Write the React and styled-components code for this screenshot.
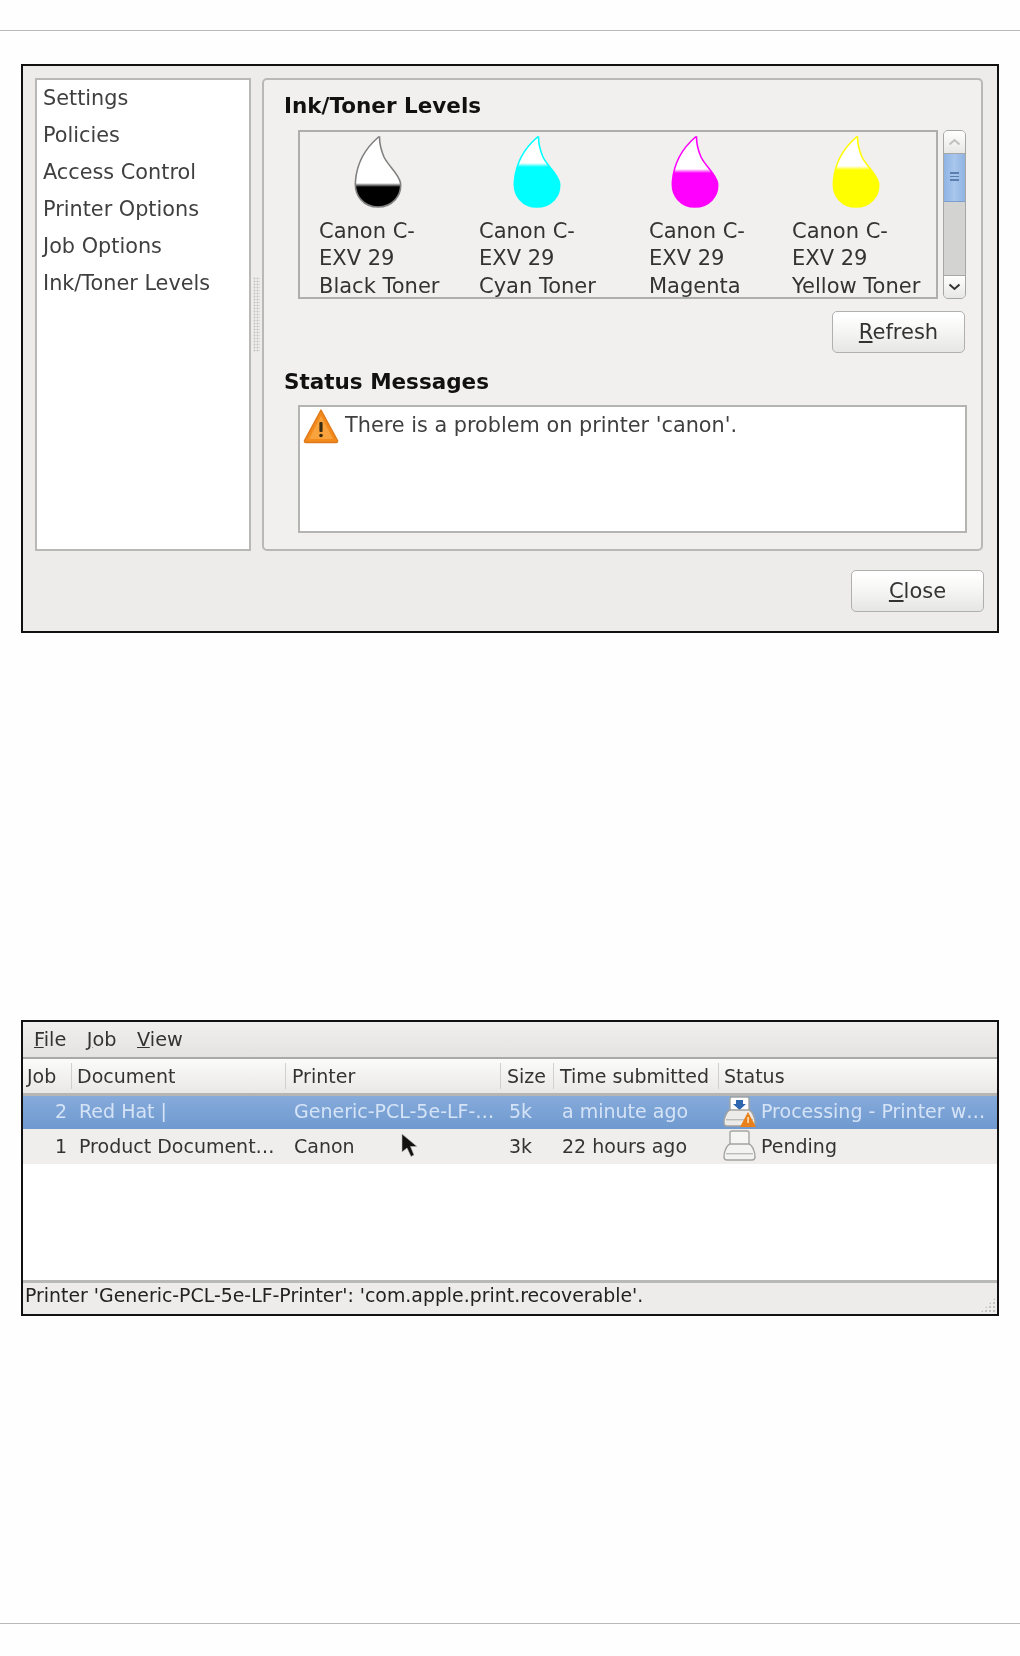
import React from "react";
import styled, { createGlobalStyle } from "styled-components";

const GlobalStyle = createGlobalStyle`
  html, body {
    margin: 0;
    padding: 0;
    background: #fefefe;
  }
  body {
    font-family: "DejaVu Sans", "Liberation Sans", sans-serif;
    color: #2e2e2e;
  }
`;

const Page = styled.div`
  position: relative;
  width: 1020px;
  height: 1656px;
  padding-top: 30px;
  box-sizing: border-box;
  overflow: hidden;
`;

const Rule = styled.div`
  height: 1px;
  background: #b9b9b9;
  margin-top: ${(p) => p.$top || 0}px;
`;

const Window = styled.div`
  box-sizing: border-box;
  width: 978px;
  margin-left: 21px;
  margin-top: ${(p) => p.$top}px;
  height: ${(p) => p.$height}px;
  border: 2px solid #111;
  background: #edecea;
  filter: blur(${(p) => p.$blur}px);
`;

const DialogBody = styled.div`
  display: flex;
  height: 473px;
  padding: 12px 13px 0 12px;
`;

const SideList = styled.ul`
  box-sizing: border-box;
  width: 216px;
  height: 473px;
  margin: 0;
  padding: 0 0 0 6px;
  list-style: none;
  background: #fff;
  border: 2px solid #b8b8b6;
  flex: none;
`;

const SideItem = styled.li`
  height: 37px;
  line-height: 36px;
  font-size: 20.8px;
  color: #3f3f3f;
  white-space: nowrap;
`;

const Grip = styled.div`
  width: 11px;
  flex: none;
  display: flex;
  align-items: center;
  justify-content: center;
`;

const GripDots = styled.div`
  width: 7px;
  height: 75px;
  background-image: radial-gradient(#c9c9c7 45%, transparent 50%);
  background-size: 3px 3px;
`;

const Panel = styled.div`
  box-sizing: border-box;
  width: 721px;
  flex: none;
  height: 473px;
  border: 2px solid #b8b8b6;
  border-radius: 5px;
  background: #f1f0ee;
  padding: 13px 14px 0 20px;
`;

const Heading = styled.h3`
  margin: ${(p) => p.$top || 0}px 0 0;
  height: 26px;
  line-height: 26px;
  font-size: 21.5px;
  font-weight: 700;
  color: #111;
  white-space: nowrap;
`;

const InkRow = styled.div`
  display: flex;
  gap: 5px;
  margin: 11px 0 0 14px;
  height: 169px;
`;

const InkBox = styled.div`
  box-sizing: border-box;
  width: 640px;
  height: 169px;
  border: 2px solid #aeaeac;
  overflow: hidden;
  padding: 4px 0 0 19px;
  display: grid;
  grid-template-columns: 160px 170px 143px auto;
  justify-items: start;
`;

const InkItem = styled.div`
  display: flex;
  flex-direction: column;
  align-items: center;
`;

const DropWrap = styled.div`
  height: 72px;
  margin-right: ${(p) => p.$nudge}px;
`;

const InkLabel = styled.div`
  margin-top: 10px;
  font-size: 21px;
  line-height: 27.3px;
  white-space: nowrap;
  color: #333;
  align-self: flex-start;
`;

const Scrollbar = styled.div`
  box-sizing: border-box;
  width: 23px;
  height: 169px;
  display: flex;
  flex-direction: column;
  border: 1.5px solid #a6a6a4;
  border-radius: 5px;
  background: #d3d3d1;
  overflow: hidden;
`;

const ScrollStep = styled.div`
  height: 23px;
  flex: none;
  display: flex;
  align-items: center;
  justify-content: center;
  background: linear-gradient(#fff, #e7e7e5);
  border-${(p) => (p.$down ? "top" : "bottom")}: 1.5px solid #a6a6a4;
  margin-top: ${(p) => (p.$down ? "auto" : 0)};
  box-sizing: border-box;
`;

const ScrollThumb = styled.div`
  height: 48px;
  flex: none;
  display: flex;
  flex-direction: column;
  gap: 2px;
  align-items: center;
  justify-content: center;
  background: linear-gradient(90deg, #8fb4e4, #a9c6ec 50%, #8fb3e2);
  border-bottom: 1px solid #7c9fd0;
  box-sizing: border-box;
  padding-bottom: 2px;
`;

const ThumbLine = styled.div`
  width: 9px;
  height: 1.5px;
  background: #5b7faf;
`;

const ButtonRow = styled.div`
  display: flex;
  justify-content: flex-end;
  margin-top: ${(p) => p.$top}px;
  padding-right: ${(p) => p.$right}px;
`;

const Button = styled.button`
  box-sizing: border-box;
  width: 133px;
  height: 42px;
  padding: 0;
  border: 1.5px solid #b0b0ae;
  border-radius: 5px;
  background: linear-gradient(#fff 10%, #f6f6f5 45%, #e6e6e4);
  font-family: inherit;
  font-size: 21px;
  color: #333;
`;

const StatusBox = styled.div`
  box-sizing: border-box;
  display: flex;
  align-items: flex-start;
  gap: 6px;
  margin: 10px 0 0 14px;
  width: 669px;
  height: 128px;
  border: 2px solid #b4b4b2;
  background: #fff;
  padding: 1px 0 0 3px;
  font-size: 20.8px;
  line-height: 34px;
  color: #3f3f3f;
  white-space: nowrap;
`;

const MenuBar = styled.div`
  display: flex;
  gap: 20.5px;
  height: 37px;
  padding: 0 0 1px 11px;
  box-sizing: border-box;
  align-items: center;
  background: linear-gradient(#f0efed, #e4e3e1);
  border-bottom: 2px solid #a9a9a7;
  font-size: 19.3px;
  color: #333;
`;

const columns = "49px 214px 215px 53px 165px 1fr";

const HeaderRow = styled.div`
  display: grid;
  grid-template-columns: ${columns};
  height: 37px;
  background: linear-gradient(#fbfbfa, #e9e8e6);
  border-bottom: 3px solid #b5b5b3;
  box-sizing: border-box;
  align-items: center;
  font-size: 19px;
  color: #333;
`;

const HeaderCell = styled.div`
  height: 26px;
  line-height: 26px;
  padding-left: ${(p) => p.$pad}px;
  border-right: ${(p) => (p.$last ? "none" : "1px solid #d0d0ce")};
  white-space: nowrap;
  overflow: hidden;
`;

const JobRow = styled.div`
  display: grid;
  grid-template-columns: ${columns};
  box-sizing: border-box;
  height: ${(p) => p.$height}px;
  padding-bottom: ${(p) => p.$lift}px;
  align-items: center;
  font-size: 19px;
  white-space: nowrap;
  color: ${(p) => (p.$selected ? "#d5e3f6" : "#333")};
  background: ${(p) => (p.$selected ? "linear-gradient(#86abdb, #6f99cf)" : "#efeeec")};
`;

const NumberCell = styled.div`
  text-align: right;
  padding-right: 5px;
`;

const TextCell = styled.div`
  padding-left: ${(p) => p.$pad}px;
  overflow: hidden;
`;

const StatusCell = styled.div`
  display: flex;
  align-items: center;
  gap: 5px;
  padding-left: 4px;
  height: 24px;
`;

const TableFill = styled.div`
  height: 116px;
  background: #fff;
`;

const StatusBar = styled.div`
  position: relative;
  box-sizing: border-box;
  height: 34px;
  padding-left: 2px;
  line-height: 25px;
  background: #edecea;
  border-top: 3px solid #b9b9b7;
  font-size: 18.9px;
  color: #222;
  white-space: nowrap;
`;

const ResizeGrip = styled.div`
  position: absolute;
  right: 1px;
  bottom: 1px;
  width: 16px;
  height: 16px;
  background-image: radial-gradient(#c4c4c2 45%, transparent 50%);
  background-size: 4px 4px;
  clip-path: polygon(100% 0, 100% 100%, 0 100%);
`;

const Cursor = styled.svg`
  position: absolute;
  left: 401px;
  top: 1133px;
  filter: blur(0.5px);
`;

const inks = [
  { id: "black", color: "#000", stroke: "#808080", level: 49, nudge: 2, lines: ["Canon C-", "EXV 29", "Black Toner"] },
  { id: "cyan", color: "#0ff", stroke: "#0ff", level: 29, nudge: 0, lines: ["Canon C-", "EXV 29", "Cyan Toner"] },
  { id: "magenta", color: "#f0f", stroke: "#f0f", level: 35, nudge: 4, lines: ["Canon C-", "EXV 29", "Magenta"] },
  { id: "yellow", color: "#ff0", stroke: "#ff0", level: 32, nudge: 0, lines: ["Canon C-", "EXV 29", "Yellow Toner"] },
];

function Drop({ id, color, stroke, level }) {
  return (
    <svg width="48" height="72" viewBox="0 0 48 72">
      <defs>
        <linearGradient id={id} gradientUnits="userSpaceOnUse" x1="0" x2="0" y1={level - 2} y2={level + 2}>
          <stop offset="0" stopColor="#fff" />
          <stop offset="1" stopColor={color} />
        </linearGradient>
      </defs>
      <path
        d="M24.5 1C14 10 3 25 1.5 45C0 60 10 71 24 71C38 71 48 60 46.5 47C45 38 35 31 30 21C27 14 25.5 8 25.5 1Z"
        fill={`url(#${id})`}
        stroke={stroke}
        strokeWidth="1.6"
      />
    </svg>
  );
}

function WarningIcon() {
  return (
    <svg width="36" height="36" viewBox="0 0 36 36" style={{ flex: "none" }}>
      <path d="M18 2L34.5 32.5Q35 34.5 33 34.5H3Q1 34.5 1.5 32.5Z" fill="#f28a1c" stroke="#e0791a" strokeWidth="1.4" strokeLinejoin="round" />
      <path d="M18 8L30 31H6Z" fill="#f9a33e" />
      <rect x="16.4" y="14" width="3.2" height="10" rx="1" fill="#3a2a10" />
      <circle cx="18" cy="27.5" r="1.8" fill="#3a2a10" />
    </svg>
  );
}

function PrinterIcon({ busy }) {
  return (
    <svg width="33" height="33" viewBox="0 0 33 33" style={{ flex: "none" }}>
      <rect x="7" y="2" width="19" height="16" rx="2" fill={busy ? "#fff" : "#f5f5f4"} stroke="#a5a5a3" strokeWidth="1.4" />
      {busy && <path d="M13 5h7v4h3l-6.5 6l-6.5-6h3Z" fill="#2f68b0" />}
      <path
        d="M7 15H26Q29 16 31 22Q32 24 32 28Q32 31 29 31H4Q1 31 1 28Q1 24 2 22Q4 16 7 15Z"
        fill={busy ? "#ecebe9" : "#f3f3f1"}
        stroke="#a3a3a1"
        strokeWidth="1.4"
      />
      <rect x="3" y="24" width="27" height="1.4" fill="#bcbcba" />
      {busy && <path d="M25 17L33 32H17Z" fill="#e8811c" />}
      {busy && <rect x="24.3" y="22" width="1.6" height="6" fill="#f8e2b4" />}
    </svg>
  );
}

function App() {
  return (
    <Page>
      <GlobalStyle />
      <Rule />
      <Window $top={33} $height={569} $blur={0.35}>
        <DialogBody>
          <SideList>
            {["Settings", "Policies", "Access Control", "Printer Options", "Job Options", "Ink/Toner Levels"].map((s) => (
              <SideItem key={s}>{s}</SideItem>
            ))}
          </SideList>
          <Grip>
            <GripDots />
          </Grip>
          <Panel>
            <Heading>Ink/Toner Levels</Heading>
            <InkRow>
              <InkBox>
                {inks.map((ink) => (
                  <InkItem key={ink.id}>
                    <DropWrap $nudge={ink.nudge}>
                      <Drop {...ink} />
                    </DropWrap>
                    <InkLabel>
                      {ink.lines.map((l) => (
                        <div key={l}>{l}</div>
                      ))}
                    </InkLabel>
                  </InkItem>
                ))}
              </InkBox>
              <Scrollbar>
                <ScrollStep>
                  <svg width="13" height="8" viewBox="0 0 13 8">
                    <path d="M1.5 6.5L6.5 2L11.5 6.5" fill="none" stroke="#c0c0be" strokeWidth="2" />
                  </svg>
                </ScrollStep>
                <ScrollThumb>
                  <ThumbLine />
                  <ThumbLine />
                  <ThumbLine />
                </ScrollThumb>
                <ScrollStep $down>
                  <svg width="13" height="8" viewBox="0 0 13 8">
                    <path d="M1.5 1.5L6.5 6L11.5 1.5" fill="none" stroke="#333" strokeWidth="2" />
                  </svg>
                </ScrollStep>
              </Scrollbar>
            </InkRow>
            <ButtonRow $top={12} $right={2}>
              <Button>
                <u>R</u>efresh
              </Button>
            </ButtonRow>
            <Heading $top={16}>Status Messages</Heading>
            <StatusBox>
              <WarningIcon />
              There is a problem on printer 'canon'.
            </StatusBox>
          </Panel>
        </DialogBody>
        <ButtonRow $top={19} $right={13}>
          <Button>
            <u>C</u>lose
          </Button>
        </ButtonRow>
      </Window>
      <Window $top={387} $height={296} $blur={0.6}>
        <MenuBar>
          <span>
            <u>F</u>ile
          </span>
          <span>
            <u>J</u>ob
          </span>
          <span>
            <u>V</u>iew
          </span>
        </MenuBar>
        <HeaderRow>
          <HeaderCell $pad={4}>Job</HeaderCell>
          <HeaderCell $pad={5}>Document</HeaderCell>
          <HeaderCell $pad={6}>Printer</HeaderCell>
          <HeaderCell $pad={6}>Size</HeaderCell>
          <HeaderCell $pad={6}>Time submitted</HeaderCell>
          <HeaderCell $pad={5} $last>
            Status
          </HeaderCell>
        </HeaderRow>
        <JobRow $selected $height={33} $lift={3}>
          <NumberCell>2</NumberCell>
          <TextCell $pad={7}>Red Hat |</TextCell>
          <TextCell $pad={8}>Generic-PCL-5e-LF-…</TextCell>
          <TextCell $pad={8}>5k</TextCell>
          <TextCell $pad={8}>a minute ago</TextCell>
          <StatusCell>
            <PrinterIcon busy />
            Processing - Printer w…
          </StatusCell>
        </JobRow>
        <JobRow $height={35} $lift={2}>
          <NumberCell>1</NumberCell>
          <TextCell $pad={7}>Product Document…</TextCell>
          <TextCell $pad={8}>Canon</TextCell>
          <TextCell $pad={8}>3k</TextCell>
          <TextCell $pad={8}>22 hours ago</TextCell>
          <StatusCell>
            <PrinterIcon />
            Pending
          </StatusCell>
        </JobRow>
        <TableFill />
        <StatusBar>
          Printer 'Generic-PCL-5e-LF-Printer': 'com.apple.print.recoverable'.
          <ResizeGrip />
        </StatusBar>
      </Window>
      <Rule $top={307} />
      <Cursor width="18" height="25" viewBox="0 0 18 25">
        <path d="M1 1L1 19L6 15L10 23.5L13 22L9.5 13.5L16 13.5Z" fill="#111" stroke="#bbb" strokeWidth="0.6" />
      </Cursor>
    </Page>
  );
}

export default App;
